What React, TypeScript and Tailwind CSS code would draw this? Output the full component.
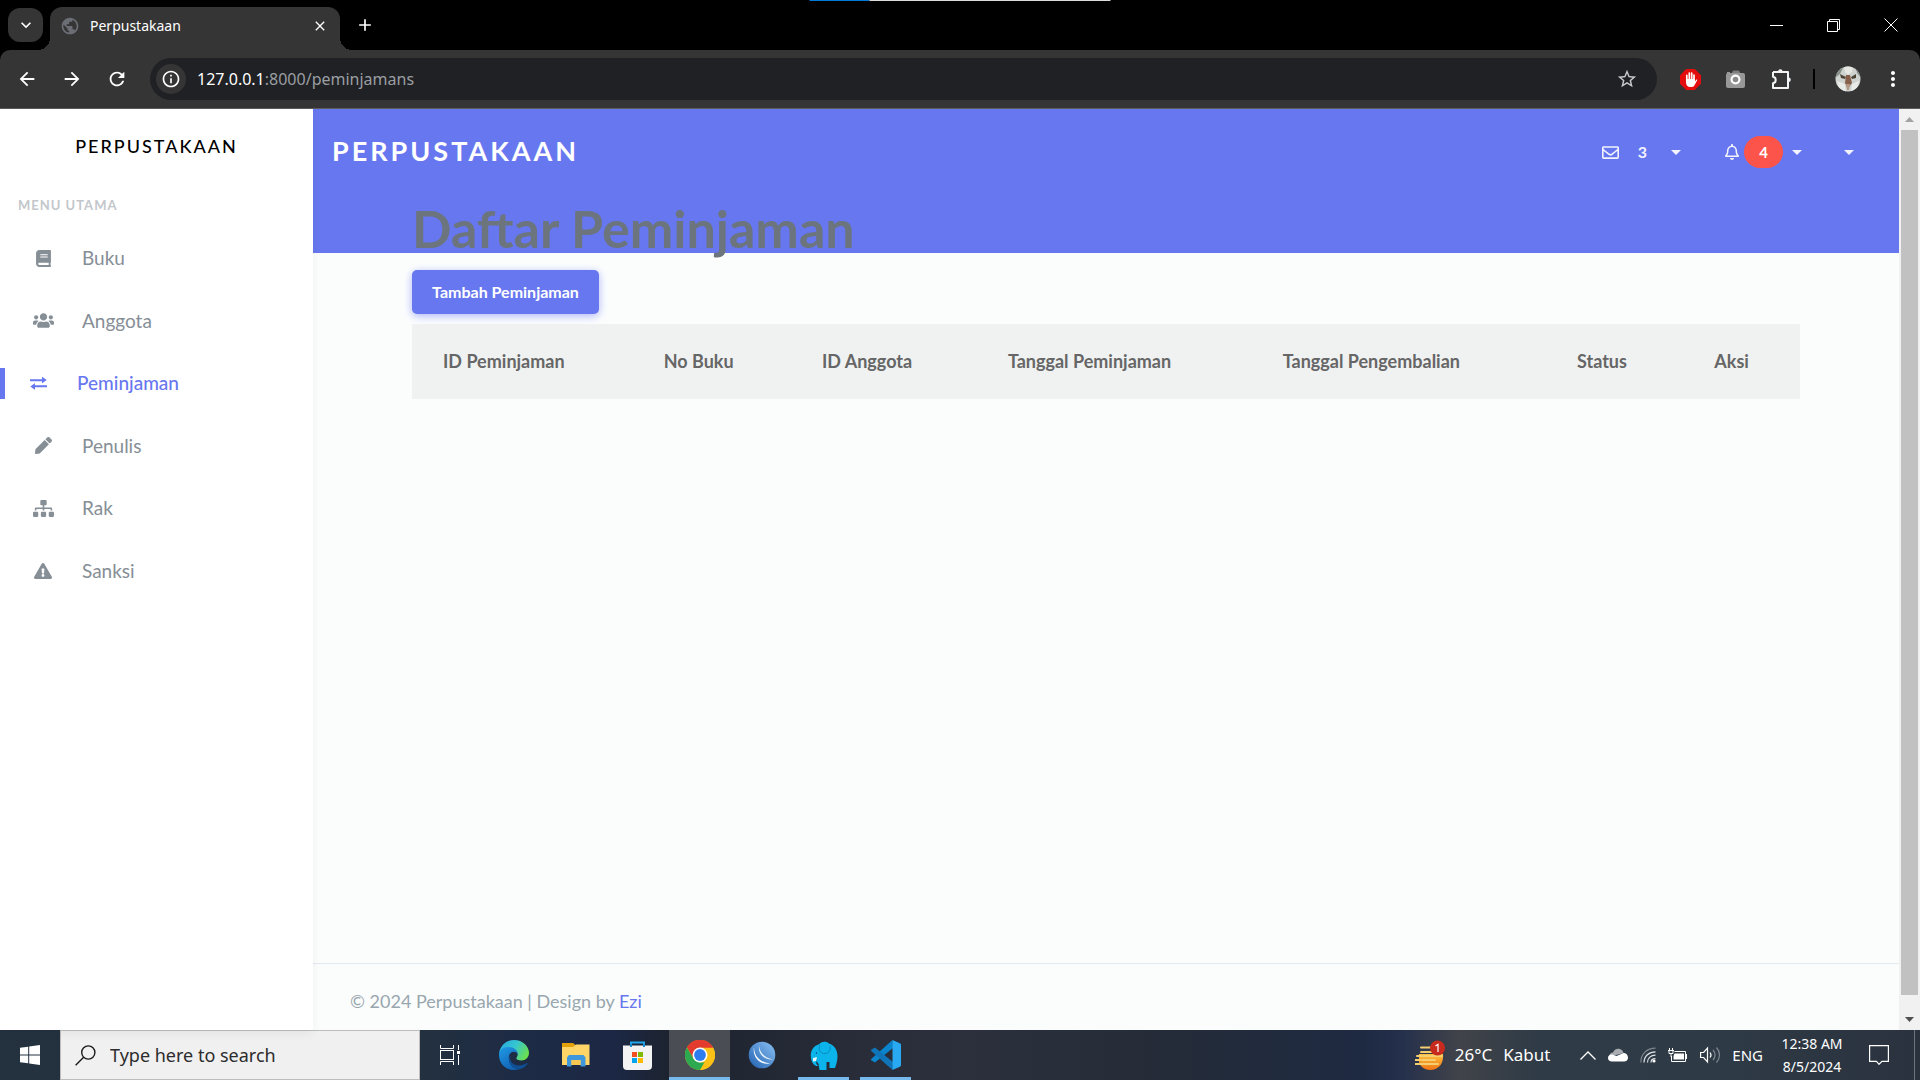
import type { ReactNode } from "react";
import {
  MdAdd,
  MdArrowBack,
  MdArrowForward,
  MdClose,
  MdInfoOutline,
  MdKeyboardArrowDown,
  MdMoreVert,
  MdPublic,
  MdRefresh,
  MdStarOutline,
} from "react-icons/md";
import {
  FaBook,
  FaExclamationTriangle,
  FaPen,
  FaRegBell,
  FaRegEnvelope,
  FaSitemap,
  FaUsers,
} from "react-icons/fa";

/* ---------- icons ---------- */

function ExchangeIcon() {
  return (
    <svg width="17" height="13" viewBox="0 0 17 13" fill="currentColor">
      <path d="M0 2.2h12V.2c0-.3.3-.3.5-.1l4.2 3-4.2 3c-.2.2-.5.2-.5-.1V4.200H0z" />
      <path d="M17 8.300H5V6.500c0-.3-.3-.3-.5-.1L.3 9.400l4.200 3.200c.2.200.5.200.5-.1v-2.200h12z" />
    </svg>
  );
}

function Caret() {
  return (
    <svg width="10" height="5" viewBox="0 0 10 5" fill="#f2f3fd">
      <path d="M0 0h10L5 5z" />
    </svg>
  );
}

function StopHandIcon() {
  return (
    <svg width="21" height="21" viewBox="0 0 21 21">
      <path d="M6.200 0h8.600L21 6.200v8.600L14.800 21H6.200L0 14.800V6.200z" fill="#e40d0d" />
      <path
        d="M6.800 13V6.300M9.300 11V4M11.700 11V4M14 12V6"
        stroke="#fff"
        strokeWidth="1.700"
        strokeLinecap="round"
      />
      <path d="M6 10h9v2.500l1-1.500c.6-.8 1.500-.3 1.100.6l-2.600 4.600c-.9 1.500-2 1.800-4 1.800C7.500 18 6 16 6 13.500z" fill="#fff" />
    </svg>
  );
}

function CameraIcon() {
  return (
    <svg width="20" height="18" viewBox="0 0 20 18">
      <path d="M6 4V2l1.500-1.500h5L14 2v2z" fill="#7d7d7d" />
      <rect x="0" y="3" width="19" height="15" rx="2" fill="#989898" />
      <rect x="1" y="2" width="3" height="2" fill="#989898" />
      <circle cx="9.500" cy="9.500" r="5" fill="#fff" />
      <circle cx="9.500" cy="9.500" r="2.800" fill="#8a8a8a" />
    </svg>
  );
}

function PuzzleIcon() {
  return (
    <svg width="22" height="22" viewBox="0 0 22 22" fill="none">
      <path
        d="M2 4h5.500M11.500 4H17v5.500M17 13.500V20H2v-4.800c3.600-.5 3.600-5.900 0-6.400V4M7 4h5.500"
        stroke="#f1f3f4"
        strokeWidth="2"
        strokeLinejoin="round"
      />
      <path d="M17 9v5" stroke="#f1f3f4" strokeWidth="2" />
      <path d="M7 3.500a2.300 2.300 0 0 1 4.600 0zM17.500 9.500a2.300 2.300 0 0 1 0 4.600z" fill="#f1f3f4" />
    </svg>
  );
}

function CatAvatar() {
  return (
    <svg width="26" height="26" viewBox="0 0 26 26">
      <defs>
        <clipPath id="avatar">
          <circle cx="13" cy="13" r="12.500" />
        </clipPath>
      </defs>
      <g clipPath="url(#avatar)">
        <rect width="26" height="26" fill="#cfd3cf" />
        <path d="M0 0h9l-4 8-5 4zM26 0h-6l2 7 4 5z" fill="#87918a" />
        <path d="M9 0h9l-1 6-4 3-3-3z" fill="#e5e7e3" />
        <path d="M5 8l6 3-1 2-4-1zM21 8l-5 3 1 2 4-1z" fill="#4d4636" />
        <path d="M11 9h4l2 8-3 4h-2l-2-4z" fill="#86604a" />
        <path d="M2 15l8 3 1 8H5zM24 15l-7 3-1 8h5z" fill="#e9ebe9" />
        <path d="M11 18h4l-1 6h-2z" fill="#b49a86" />
      </g>
    </svg>
  );
}

function WindowsLogo() {
  return (
    <svg width="20" height="20" viewBox="0 0 20 20" fill="#fff">
      <path d="M0 2.800l8.200-1.100v7.800H0zM9.200 1.500L20 0v9.500H9.200zM0 10.500h8.200v7.800L0 17.200zM9.200 10.500H20V20L9.200 18.500z" />
    </svg>
  );
}

function SearchIcon() {
  return (
    <svg width="21" height="21" viewBox="0 0 21 21" fill="none" stroke="#1b1b1b" strokeWidth="1.400">
      <circle cx="13.300" cy="7.500" r="6.600" />
      <path d="M8.600 12.300L.6 20.300" />
    </svg>
  );
}

function TaskViewIcon() {
  return (
    <svg width="21" height="20" viewBox="0 0 21 20" fill="none" stroke="#fff" strokeWidth="1">
      <path d="M.5 0v3.500h13V0M.5 20v-3.500h13V20M18.500 0v5M18.500 10v10" />
      <rect x=".5" y="5.500" width="13" height="9" />
      <rect x="17.500" y="6.500" width="2" height="2" fill="#fff" />
    </svg>
  );
}

function EdgeIcon() {
  return (
    <svg width="30" height="30" viewBox="0 0 30 30">
      <defs>
        <linearGradient id="edgeTop" x1="0" y1="0.200" x2="1" y2="0.600">
          <stop offset="0" stopColor="#2aa9e0" />
          <stop offset="0.500" stopColor="#36c6d0" />
          <stop offset="1" stopColor="#6be04b" />
        </linearGradient>
        <linearGradient id="edgeBody" x1="0" y1="0" x2="0.600" y2="1">
          <stop offset="0" stopColor="#1f9be6" />
          <stop offset="1" stopColor="#1263b5" />
        </linearGradient>
      </defs>
      <path d="M0 14C.8 6 7 0 15 0c9 0 15 6.500 15 13 0 4.500-3.500 7.500-7.500 7.500-3.500 0-5.200-1.200-5.200-2.200 0-.8 1.400-1.500 1.400-4C18.700 11 15 8 10 8 5 8 1.500 10.500 0 14z" fill="url(#edgeTop)" />
      <path d="M0 15c0-4.500 4-8 9.500-8 5.500 0 9.200 3.500 9.200 7-1-1.500-2.500-2.200-4.200-2.200C11 12 9 16 10 20c1.200 5.500 5 8.500 9.500 9.300C18 29.800 16.500 30 15 30 6.500 30 0 23.500 0 15z" fill="url(#edgeBody)" />
      <path d="M11.500 15.500c-1.800 6 3.500 10.500 9.500 10 3-.3 5.500-1.700 6.800-2.500.6-.3 1 .2.700.8-1.800 3-5 5.200-9 5.700-5-.5-9.500-5-9.500-10 0-1.500.5-3 1.500-4z" fill="#104f93" />
    </svg>
  );
}

function FolderIcon() {
  return (
    <svg width="28" height="24" viewBox="0 0 28 24">
      <path d="M0 0h11l2.500 2v4H0z" fill="#e3a008" />
      <path d="M0 4h11l3-2.500h13.500V22H0z" fill="#ffd567" />
      <path d="M5 23.500V14.500L7 12h14.500l2 2.500v9h-5V17H9.500v6.500z" fill="#3e97dc" />
      <path d="M9.500 17h9v5h-9z" fill="#f6c552" />
    </svg>
  );
}

function StoreIcon() {
  return (
    <svg width="29" height="29" viewBox="0 0 29 29">
      <path d="M8 7V1.500h13V7" fill="none" stroke="#22a7ea" strokeWidth="2" />
      <path d="M0 4.500h29V25a4 4 0 0 1-4 4H4a4 4 0 0 1-4-4z" fill="#f3f3f3" />
      <path d="M8 3v3M21 3v3" stroke="#188bd0" strokeWidth="2" />
      <path d="M9 11h5v5H9z" fill="#f25022" />
      <path d="M15 11h5v5h-5z" fill="#7fba00" />
      <path d="M9 17h5v5H9z" fill="#00a4ef" />
      <path d="M15 17h5v5h-5z" fill="#ffb900" />
    </svg>
  );
}

function ChromeIcon() {
  return (
    <svg width="30" height="30" viewBox="0 0 30 30">
      <circle cx="15" cy="15" r="15" fill="#fbc116" />
      <path d="M2 7.500A15 15 0 0 1 28 7.500H15L8.500 18.700z" fill="#e33b2e" />
      <path d="M2 7.500l6.500 11.200L15 22.500h6.500L15 30A15 15 0 0 1 2 7.500z" fill="#2da94f" />
      <path d="M15 30l6.500-11.200V11L28 7.500A15 15 0 0 1 15 30z" fill="#fbc116" />
      <path d="M2 7.500A15 15 0 0 1 28 7.500z" fill="#e33b2e" />
      <circle cx="15" cy="15" r="7.500" fill="#fff" />
      <circle cx="15" cy="15" r="5.900" fill="#2d7cf0" />
    </svg>
  );
}

function GlobeAppIcon() {
  return (
    <svg width="28" height="28" viewBox="0 0 28 28">
      <defs>
        <linearGradient id="globeApp" x1="0" y1="1" x2="1" y2="0">
          <stop offset="0" stopColor="#1f5fae" />
          <stop offset="1" stopColor="#8cc2f5" />
        </linearGradient>
      </defs>
      <circle cx="14" cy="14" r="13.300" fill="url(#globeApp)" />
      <path d="M6 6c0 9 6 15.500 16 16.500C13 24.500 4 17 6 6z" fill="#fff" />
      <path d="M11 5c1 7 6 12 14 13.500C16 19 10 13 11 5z" fill="#e6f1fc" />
    </svg>
  );
}

function ElephantIcon() {
  return (
    <svg width="28" height="29" viewBox="0 0 28 29">
      <path
        d="M9.500 3C11.500 0 17 0 19 2.500 24 4 27.500 9 27.500 15c0 4-1 8-2.500 12h-5.500v-6h-3v8H9.500l-1-6-2-3c-.8 2 .2 4 2 5-4 .5-7-3-7.500-8C0 10 3 5 9.500 3z"
        fill="#0bb5ec"
      />
      <path d="M10 4c-2 4 0 8 3.500 8.500C18 13 21 10 20 5" fill="none" stroke="#0989b8" strokeWidth="1" />
      <path d="M3 17l4-1-1 4-3 .5z" fill="#e9f7fc" />
      <circle cx="6.500" cy="12" r=".7" fill="#0a3d52" />
    </svg>
  );
}

function CodeIcon() {
  return (
    <svg width="30" height="30" viewBox="0 0 30 30">
      <path d="M22 8L4 22.500 .5 20.500c-.7-.5-.7-1.200 0-1.800L21.500 0z" fill="#0a84cc" />
      <path d="M22 22L4 7.500.5 9.500c-.7.500-.7 1.200 0 1.800L21.500 30z" fill="#0f74b8" />
      <path d="M21.500 0L28.800 3.300c.7.300 1.200 1 1.200 1.800v19.800c0 .8-.5 1.500-1.200 1.800L21.500 30z" fill="#29a9f2" />
    </svg>
  );
}

function WeatherIcon() {
  return (
    <svg width="31" height="31" viewBox="0 0 31 31">
      <defs>
        <linearGradient id="sun" x1="0" y1="0" x2="0" y2="1">
          <stop offset="0" stopColor="#ffc23d" />
          <stop offset="1" stopColor="#ef7414" />
        </linearGradient>
      </defs>
      <path d="M4 14h24c1 9-4 16-13 16-6 0-10-4-11-8z" fill="url(#sun)" />
      <path d="M6 7.500h4M11 7.500h9M6 12h17M2 16h25M0 20h5M7 20h13M0 24h23" stroke="#f4cf72" strokeWidth="2" strokeLinecap="round" />
      <circle cx="22.500" cy="8" r="7.500" fill="#c92a1e" />
      <path d="M20.500 6l2.500-1.700V12" stroke="#fff" strokeWidth="1.200" fill="none" />
    </svg>
  );
}

function CloudIcon() {
  return (
    <svg width="20" height="14" viewBox="0 0 20 14">
      <path d="M1 9C1 6 3 4.500 5 4.500 6 1.500 9 0 12 1c2 .7 3 2 3.500 4z" fill="#a9adb1" />
      <path d="M4 13.500c-2.500 0-4-1.500-4-3.500s1.500-3.500 4-3.500L8.500 8l7-3C18 5 20 7 20 9.500s-1.500 4-4 4z" fill="#fff" />
    </svg>
  );
}

function WifiIcon() {
  return (
    <svg width="16" height="16" viewBox="0 0 16 16" fill="none" strokeWidth="1.200">
      <path d="M.8 15.500C.8 7 7 1.200 15.500 1.200" stroke="#7e878f" />
      <path d="M4 15.500C4 9 9 4.800 15.500 4.800M7.500 15.500c0-4.500 3.500-7.300 8-7.300M11 15.500c0-2.500 1.500-3.800 4.500-3.800" stroke="#dfe2e5" />
      <circle cx="14" cy="14" r="1.600" fill="#fff" />
    </svg>
  );
}

function BatteryIcon() {
  return (
    <svg width="20" height="15" viewBox="0 0 20 15" fill="none" stroke="#fff">
      <path d="M6.500 3.500h11v10h-14V8M18.500 6v5M1.500 0v2M4.500 0v2M0 2.500h6M1 3v2.500h4V3M3 6v3" />
      <path d="M6.500 5.500h9.500v6H5.500V8z" fill="#fff" stroke="none" />
    </svg>
  );
}

function VolumeIcon() {
  return (
    <svg width="21" height="18" viewBox="0 0 21 18" fill="none">
      <path d="M.6 6.500h3L7.500 2v14l-3.900-4.500h-3z" stroke="#fff" strokeWidth="1.200" />
      <path d="M10 6.500c1.200 1.500 1.200 3.500 0 5" stroke="#fff" strokeWidth="1.200" />
      <path d="M13 4c2.500 3 2.500 7 0 10M16.500 1.500c4 4.500 4 10.500 0 15" stroke="#7e878f" strokeWidth="1.200" />
    </svg>
  );
}

function NotificationIcon() {
  return (
    <svg width="20" height="20" viewBox="0 0 20 20" fill="none" stroke="#fff" strokeWidth="1.200">
      <path d="M.6.6h18.800v15.800H13L10 19.300 7.500 16.400H.6z" />
    </svg>
  );
}

/* ---------- browser chrome ---------- */

function TitleBar() {
  return (
    <div className="relative flex h-[50px] shrink-0 items-end bg-black text-white">
      <div className="absolute top-0 left-1/2 flex h-px w-[301px] -translate-x-1/2">
        <span className="w-[60px] bg-[#0078d7]" />
        <span className="flex-1 bg-[#dcdcdc]" />
      </div>
      <button aria-label="Search tabs" className="mb-2 ml-2 flex h-[34px] w-[35px] items-center justify-center rounded-xl bg-[#353535]">
        <MdKeyboardArrowDown size={20} />
      </button>
      <div className="relative ml-[7px] flex h-[43px] w-[290px] items-center rounded-t-xl bg-[#353535] pr-[12px] pb-[6px] pl-[10px]">
        <span className="absolute bottom-0 -left-3 size-3 bg-[radial-gradient(circle_at_0_0,transparent_12px,#353535_12px)]" />
        <span className="absolute -right-3 bottom-0 size-3 bg-[radial-gradient(circle_at_100%_0,transparent_12px,#353535_12px)]" />
        <MdPublic size={20} className="text-[#6b6f75]" />
        <span className="ml-[10px] flex-1 text-[14px]">Perpustakaan</span>
        <button aria-label="Close tab">
          <MdClose size={16} />
        </button>
      </div>
      <button aria-label="New tab" className="mb-[15px] ml-[15px]">
        <MdAdd size={20} />
      </button>
      <div className="mr-px ml-auto flex h-full items-center">
        <button aria-label="Minimize" className="flex h-full w-[57px] items-center justify-center">
          <svg width="13" height="13" viewBox="0 0 13 13" stroke="#fff">
            <path d="M0 6.500h13" />
          </svg>
        </button>
        <button aria-label="Restore" className="flex h-full w-[57px] items-center justify-center">
          <svg width="13" height="13" viewBox="0 0 13 13" stroke="#fff" fill="none">
            <path d="M.5 2.500h10v10H.5zM2.500 2.500v-2h10v10h-2" />
          </svg>
        </button>
        <button aria-label="Close" className="flex h-full w-[57px] items-center justify-center">
          <svg width="14" height="14" viewBox="0 0 14 14" stroke="#fff">
            <path d="M.5.5l13 13M13.500.5l-13 13" />
          </svg>
        </button>
      </div>
    </div>
  );
}

function Toolbar() {
  return (
    <div className="shrink-0 bg-black">
      <div className="flex h-[59px] items-center rounded-t-[10px] border-b border-[#5c5c5c] bg-[#353535] text-white">
        <div className="flex w-[150px] items-center gap-[23px] pl-[16px]">
          <button aria-label="Back">
            <MdArrowBack size={22} />
          </button>
          <button aria-label="Forward">
            <MdArrowForward size={22} />
          </button>
          <button aria-label="Reload">
            <MdRefresh size={22} />
          </button>
        </div>
        <div className="flex h-[42px] flex-1 items-center rounded-full bg-[#202124] pr-[19px] pl-[6px]">
          <button aria-label="Site information" className="flex size-[30px] items-center justify-center rounded-full bg-[#353535]">
            <MdInfoOutline size={20} />
          </button>
          <span className="ml-[11px] flex-1 text-[16px] text-[#9a9ea2]">
            <span className="text-white">127.0.0.1</span>:8000/peminjamans
          </span>
          <button aria-label="Bookmark" className="text-[#c7c9cc]">
            <MdStarOutline size={22} />
          </button>
        </div>
        <div className="flex w-[263px] items-center pl-[23px]">
          <button aria-label="Ad blocker" className="mr-[25px]">
            <StopHandIcon />
          </button>
          <button aria-label="Screenshot" className="mr-[25px]">
            <CameraIcon />
          </button>
          <button aria-label="Extensions" className="mr-[20px]">
            <PuzzleIcon />
          </button>
          <span className="mr-[20px] h-5 w-0.5 bg-black" />
          <button aria-label="Profile" className="mr-[20px]">
            <CatAvatar />
          </button>
          <button aria-label="Menu">
            <MdMoreVert size={24} />
          </button>
        </div>
      </div>
    </div>
  );
}

/* ---------- application ---------- */

const MENU: { label: string; icon: ReactNode; active?: boolean }[] = [
  { label: "Buku", icon: <FaBook size={17} /> },
  { label: "Anggota", icon: <FaUsers size={21} /> },
  { label: "Peminjaman", icon: <ExchangeIcon />, active: true },
  { label: "Penulis", icon: <FaPen size={17} /> },
  { label: "Rak", icon: <FaSitemap size={21} /> },
  { label: "Sanksi", icon: <FaExclamationTriangle size={18} /> },
];

function Sidebar() {
  return (
    <aside className="z-10 w-[313px] shrink-0 bg-white shadow-[0_4px_10px_rgba(0,0,0,0.05)]">
      <a href="#" className="flex h-[75px] items-center justify-center text-[18px] font-medium tracking-[2px] text-black uppercase">
        Perpustakaan
      </a>
      <div className="flex h-[43px] items-center pl-[18px] text-[13px] font-bold tracking-[1px] text-[#c3c7cb] uppercase">
        Menu Utama
      </div>
      <nav className="grid h-[375px] grid-rows-6">
        {MENU.map((item) => (
          <a
            key={item.label}
            href="#"
            className={
              item.active
                ? "flex items-center text-[19px] font-medium text-[#6777ef]"
                : "flex items-center pl-[5px] text-[19px] text-[#868e96]"
            }
          >
            {item.active && <span className="h-[31px] w-[5px] bg-[#6777ef]" />}
            <span className={item.active ? "ml-[16px] flex w-[35px] justify-center" : "ml-[20px] flex w-[36px] justify-center"}>
              {item.icon}
            </span>
            <span className="ml-[21px]">{item.label}</span>
          </a>
        ))}
      </nav>
    </aside>
  );
}

const COLUMNS = [
  { label: "ID Peminjaman", width: "w-[15.9%]" },
  { label: "No Buku", width: "w-[11.4%]" },
  { label: "ID Anggota", width: "w-[13.4%]" },
  { label: "Tanggal Peminjaman", width: "w-[19.8%]" },
  { label: "Tanggal Pengembalian", width: "w-[21.2%]" },
  { label: "Status", width: "w-[9.9%]" },
  { label: "Aksi", width: "w-[8.4%]" },
];

function Navbar() {
  return (
    <header className="flex h-[84px] shrink-0 items-center pr-[45px] pl-[19px] text-white">
      <a href="#" className="text-[27px] font-bold tracking-[3px] uppercase">
        Perpustakaan
      </a>
      <div className="ml-auto flex items-center pt-[2px] text-[16px] font-bold text-[#f2f3fd]">
        <button aria-label="Messages" className="flex items-center">
          <FaRegEnvelope size={17} />
          <span className="ml-[19px]">3</span>
          <span className="ml-[24px]">
            <Caret />
          </span>
        </button>
        <button aria-label="Notifications" className="ml-[43px] flex items-center">
          <FaRegBell size={16} />
          <span className="ml-[4px] flex h-8 w-[39px] items-center justify-center rounded-full bg-[#fc544b] text-[15px] text-white">4</span>
          <span className="ml-[9px]">
            <Caret />
          </span>
        </button>
        <button aria-label="Account" className="ml-[42px] flex h-8 items-center">
          <Caret />
        </button>
      </div>
    </header>
  );
}

function Content() {
  return (
    <main className="flex min-w-0 flex-1 flex-col bg-[linear-gradient(#6777ef_144px,#fbfdfd_144px)]">
      <Navbar />
      <section className="flex-1 px-[99px] pt-[5px]">
        <h1 className="text-[52px] leading-[60px] font-bold text-[#6c757d]">Daftar Peminjaman</h1>
        <button className="mt-[12px] h-[44px] w-[187px] rounded-[5px] bg-[#6777ef] text-[16px] font-bold text-white shadow-[0_2px_8px_#acb5f6]">
          Tambah Peminjaman
        </button>
        <table className="mt-[10px] w-full table-fixed">
          <thead>
            <tr className="h-[75px] bg-[#f0f2f2] text-left text-[18px] text-[#666]">
              {COLUMNS.map((column) => (
                <th key={column.label} scope="col" className={`${column.width} pl-[31px] font-bold whitespace-nowrap`}>
                  {column.label}
                </th>
              ))}
            </tr>
          </thead>
          <tbody />
        </table>
      </section>
      <footer className="flex h-[67px] shrink-0 items-center border-t border-[#e3eaef] pt-[9px] pl-[37px] text-[18px] text-[#98a6ad]">
        <p>
          © 2024 Perpustakaan | Design by{" "}
          <a href="#" className="text-[#6777ef]">
            Ezi
          </a>
        </p>
      </footer>
    </main>
  );
}

function Scrollbar() {
  return (
    <div className="flex w-[21px] shrink-0 flex-col items-center bg-[#f1f1f1]">
      <span className="flex h-[21px] items-center">
        <svg width="9" height="5" viewBox="0 0 9 5" fill="#a3a3a3">
          <path d="M0 5h9L4.500 0z" />
        </svg>
      </span>
      <span className="w-[17px] flex-1 bg-[#c1c1c1]" />
      <span className="flex h-[35px] items-end pb-[8px]">
        <svg width="9" height="5" viewBox="0 0 9 5" fill="#505050">
          <path d="M0 0h9L4.500 5z" />
        </svg>
      </span>
    </div>
  );
}

/* ---------- taskbar ---------- */

const APPS: { label: string; icon: ReactNode; state?: "open" | "focused" }[] = [
  { label: "Microsoft Edge", icon: <EdgeIcon /> },
  { label: "File Explorer", icon: <FolderIcon /> },
  { label: "Microsoft Store", icon: <StoreIcon /> },
  { label: "Google Chrome", icon: <ChromeIcon />, state: "focused" },
  { label: "Web browser", icon: <GlobeAppIcon /> },
  { label: "Database server", icon: <ElephantIcon />, state: "open" },
  { label: "Code editor", icon: <CodeIcon />, state: "open" },
];

function Taskbar() {
  return (
    <div className="flex h-[50px] shrink-0 items-center bg-[linear-gradient(90deg,#243240_0%,#22303f_22%,#1e2b45_27%,#1b2744_32%,#1d232e_35%,#282d39_45%,#2b303c_50%,#252c38_60%,#1e2a42_71%,#24304c_73%,#414349_76%,#2f3b46_80%,#2e3a45_90%,#2a323e_100%)] text-white">
      <button aria-label="Start" className="flex h-full w-[60px] items-center justify-center">
        <WindowsLogo />
      </button>
      <label className="flex h-full w-[360px] items-center border border-[#bcbcbc] bg-[#f0f0f0] pl-[14px]">
        <SearchIcon />
        <input aria-label="Search" placeholder="Type here to search" className="ml-[14px] min-w-0 flex-1 bg-transparent text-[18px] outline-none placeholder:text-[#2c2c2c]" />
      </label>
      <button aria-label="Task view" className="flex h-full w-[60px] items-center justify-center">
        <TaskViewIcon />
      </button>
      <div className="ml-[3px] flex h-full gap-px">
        {APPS.map((app) => (
          <button
            key={app.label}
            aria-label={app.label}
            className={
              app.state === "focused"
                ? "flex h-full w-[61px] flex-col items-center bg-[#4b4d55]"
                : "flex h-full w-[61px] flex-col items-center"
            }
          >
            <span className="flex flex-1 items-center pt-[3px]">{app.icon}</span>
            <span
              className={
                app.state === "focused"
                  ? "h-[3px] w-full bg-[#76b9ed]"
                  : app.state === "open"
                    ? "h-[3px] w-[51px] bg-[#76b9ed]"
                    : "h-[3px]"
              }
            />
          </button>
        ))}
      </div>
      <div className="ml-auto flex h-full items-center">
        <button className="flex items-center text-[17px]">
          <WeatherIcon />
          <span className="ml-[9px]">26°C</span>
          <span className="ml-[11px]">Kabut</span>
        </button>
        <button aria-label="Show hidden icons" className="ml-[30px]">
          <svg width="16" height="9" viewBox="0 0 16 9" fill="none" stroke="#fff" strokeWidth="1.300">
            <path d="M.5 8.500L8 1l7.500 7.500" />
          </svg>
        </button>
        <div className="ml-[12px] flex items-center gap-[12px]">
          <CloudIcon />
          <WifiIcon />
          <BatteryIcon />
          <VolumeIcon />
        </div>
        <button className="ml-[11px] text-[15px]">ENG</button>
        <button className="ml-[17px] w-[64px] text-center text-[14px] leading-[23px] whitespace-nowrap">
          <span className="block">12:38 AM</span>
          <span className="block">8/5/2024</span>
        </button>
        <button aria-label="Notifications" className="ml-[25px]">
          <NotificationIcon />
        </button>
        <span className="mr-[5px] ml-[25px] h-[50px] w-px bg-[#6c757d]" />
      </div>
    </div>
  );
}

export default function App() {
  return (
    <div className="flex h-screen flex-col overflow-hidden font-['Noto_Sans',sans-serif]">
      <TitleBar />
      <Toolbar />
      <div className="flex min-h-0 flex-1 font-['Lato',sans-serif]">
        <Sidebar />
        <Content />
        <Scrollbar />
      </div>
      <Taskbar />
    </div>
  );
}
